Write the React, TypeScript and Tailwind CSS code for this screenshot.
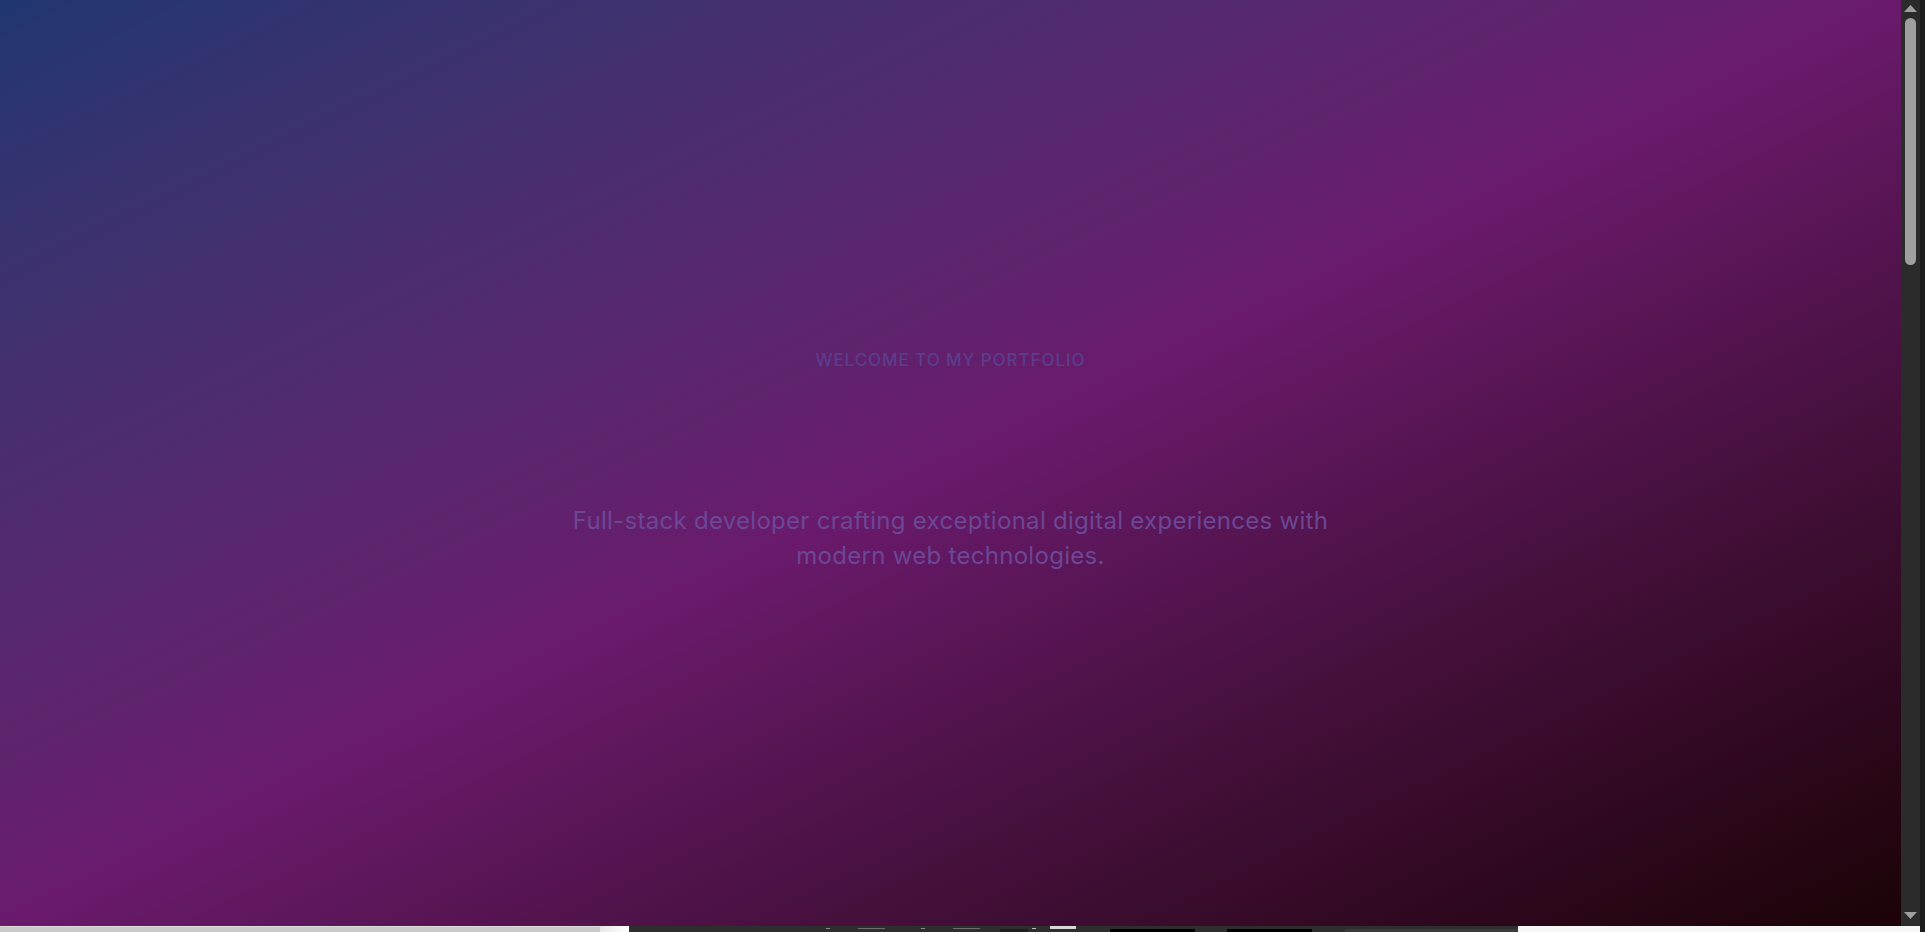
import React from "react";

const Hero = () => {
  return (
    <section className="h-full w-full bg-gradient-to-br from-[#1f3670] via-[#6a1a6c] to-[#1c0307] flex flex-col items-center justify-center text-center pb-[5px]">
      <p className="text-[17px] font-medium tracking-[0.055em] uppercase text-[#5b3d8e]">
        Welcome to my portfolio
      </p>
      <div className="h-[129px]" />
      <p className="max-w-3xl text-2xl tracking-[0.012em] leading-[35px] text-[#6c4796]">
        Full-stack developer crafting exceptional digital experiences with
        modern web technologies.
      </p>
    </section>
  );
};

const Scrollbar = () => {
  return (
    <div className="w-[19px] bg-[#2b2b2b] flex flex-col items-center">
      <div className="h-[17px] w-full flex items-center justify-center">
        <svg width="13" height="7" viewBox="0 0 13 7">
          <path d="M6.5 0 L13 7 L0 7 Z" fill="#9f9f9f" />
        </svg>
      </div>
      <div className="mt-[1px] h-[247px] w-[11px] rounded-full bg-[#9f9f9f]" />
      <div className="flex-1" />
      <div className="h-[21px] w-full flex items-start justify-center pt-[7px]">
        <svg width="13" height="7" viewBox="0 0 13 7">
          <path d="M0 0 L13 0 L6.5 7 Z" fill="#9f9f9f" />
        </svg>
      </div>
    </div>
  );
};

const BottomStrip = () => {
  return (
    <div className="flex h-[6px]">
      <div className="w-[600px] bg-[#c9c9c9] border-t border-[#dedede]" />
      <div className="w-[29px] bg-gradient-to-r from-[#e8e8e8] to-white" />
      <div className="w-[889px] bg-[#2e2e2e] flex items-start">
        <div className="ml-[197px] mt-[2px] h-[1px] w-[4px] bg-[#8c8c8c]" />
        <div className="ml-[28px] mt-[2px] h-[1px] w-[27px] bg-[#6e6e6e]" />
        <div className="ml-[36px] mt-[2px] h-[1px] w-[4px] bg-[#8c8c8c]" />
        <div className="ml-[28px] mt-[2px] h-[1px] w-[27px] bg-[#6e6e6e]" />
        <div className="ml-[20px] mt-[3px] h-[3px] w-[28px] bg-[#1e1e1e]" />
        <div className="ml-[4px] mt-[2px] h-[1px] w-[4px] bg-[#bdbdbd]" />
        <div className="ml-[14px] mt-0 h-[3px] w-[26px] bg-[#d8d8d8]" />
        <div className="ml-[34px] mt-[3px] h-[3px] w-[85px] bg-black" />
        <div className="ml-[32px] mt-[3px] h-[3px] w-[85px] bg-black" />
        <div className="ml-[33px] mt-[3px] h-[3px] flex-1 bg-[#3a3a3a]" />
      </div>
      <div className="flex-1 bg-[#f7f7f7]" />
      <div className="w-[5px] bg-[#1c1c1c]" />
    </div>
  );
};

export default function App() {
  return (
    <div
      className="h-screen flex flex-col bg-[#1c1c1c] overflow-hidden"
      style={{ fontFamily: "Inter, 'Noto Sans', sans-serif" }}
    >
      <div className="flex flex-1 min-h-0">
        <main className="flex-1 min-w-0 overflow-hidden">
          <Hero />
        </main>
        <Scrollbar />
        <div className="w-[5px] bg-[#1c1c1c]" />
      </div>
      <BottomStrip />
    </div>
  );
}
